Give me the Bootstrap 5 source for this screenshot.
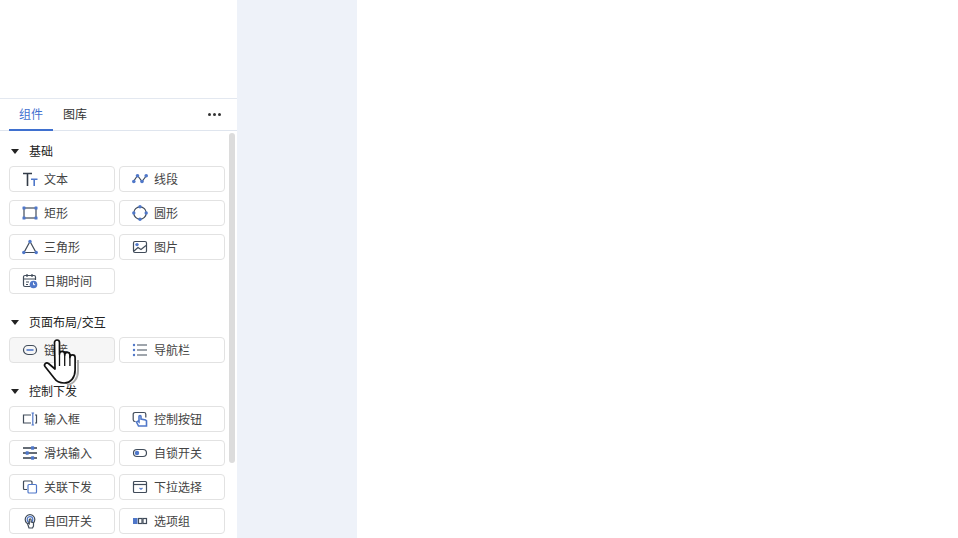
<!DOCTYPE html>
<html lang="zh">
<head>
<meta charset="utf-8">
<title>组件</title>
<link href="https://cdn.jsdelivr.net/npm/bootstrap@5.3.0/dist/css/bootstrap.min.css" rel="stylesheet">
<style>
html,body{height:100%;overflow:hidden;background:#fff}
body{font:12px/1.4 "Noto Sans CJK SC","Liberation Sans",sans-serif;color:#333}
.side-pane{width:237px;height:538px;position:relative;flex:none;overflow:hidden}
.top-gap{height:99px;border-bottom:1px solid #e3e8f0}
.tab-bar{height:32px;border-bottom:1px solid #dfe5ee;padding-left:9px;padding-right:16px}
.tab-item{width:44px;height:32px;display:flex;align-items:center;justify-content:center;color:#333}
.tab-on{color:#3f70cf;border-bottom:2px solid #3f70cf;height:33px;padding-top:1px}
.dot-row{gap:2px}
.dot-row i{width:3px;height:3px;border-radius:50%;background:#333;display:block}
.lib-body{padding:10px 12px 0 9px}
.sec-head{height:20px;margin-bottom:5px;gap:10px;color:#222}
.sec-arrow{width:0;height:0;border-left:4px solid transparent;border-right:4px solid transparent;border-top:5px solid #222;margin-left:2px}
.tool-grid{display:grid;grid-template-columns:106px 106px;gap:8px 4px;margin-bottom:18px}
.tool-btn{height:26px;border:1px solid #e2e2e2;border-radius:4px;background:#fff;padding:0 0 0 12px;gap:6px;color:#444;white-space:nowrap}
.tool-hover{background:#f6f6f6}
.tool-btn svg{width:16px;height:16px;flex:none}
.ink{fill:none;stroke:#414c5a;stroke-width:1.2}
.ink-bold{fill:none;stroke:#333c48;stroke-width:1.6}
.tint{fill:none;stroke:#4f77c9;stroke-width:1.2}
.tint-bold{fill:none;stroke:#4f77c9;stroke-width:1.6}
.tint-fill{fill:#4f77c9}
.bar-track{position:absolute;left:229px;top:133px;width:6px;height:330px;border-radius:3px;background:#dcdcdc}
.hand-cursor{position:absolute;left:42px;top:337px;width:38px;height:50px}
.mid-pane{width:120px;height:538px;background:#eef2f9;flex:none}
</style>
</head>
<body class="d-flex">
<div class="side-pane">
  <div class="top-gap"></div>
  <div class="tab-bar d-flex align-items-center">
    <div class="tab-item tab-on">组件</div>
    <div class="tab-item">图库</div>
    <div class="d-flex dot-row ms-auto"><i></i><i></i><i></i></div>
  </div>
  <div class="lib-body">
    <div class="sec-head d-flex align-items-center"><span class="sec-arrow"></span><span>基础</span></div>
    <div class="tool-grid">
      <div class="tool-btn d-flex align-items-center"><svg viewBox="0 0 16 16"><path class="ink-bold" d="M1 2.500H10M5.500 2.500V15"/><path class="tint-bold" d="M9 8.200H15.500M12.200 8.200V15"/></svg>文本</div>
      <div class="tool-btn d-flex align-items-center"><svg viewBox="0 0 16 16"><path class="ink" d="M1.500 10.500L5.500 4.500L10 10.500L14.500 4.500"/><circle class="tint-fill" cx="1.800" cy="10.500" r="1.800"/><circle class="tint-fill" cx="5.500" cy="4.800" r="1.800"/><circle class="tint-fill" cx="10" cy="10.500" r="1.800"/><circle class="tint-fill" cx="14.200" cy="4.800" r="1.800"/></svg>线段</div>
      <div class="tool-btn d-flex align-items-center"><svg viewBox="0 0 16 16"><rect class="ink" x="2" y="3" width="12" height="10"/><g class="tint-fill"><rect x="0.500" y="1.500" width="3" height="3" rx=".6"/><rect x="12.500" y="1.500" width="3" height="3" rx=".6"/><rect x="0.500" y="11.500" width="3" height="3" rx=".6"/><rect x="12.500" y="11.500" width="3" height="3" rx=".6"/></g></svg>矩形</div>
      <div class="tool-btn d-flex align-items-center"><svg viewBox="0 0 16 16"><circle class="ink" cx="8" cy="8" r="6.200"/><g class="tint-fill"><circle cx="8" cy="1.800" r="1.700"/><circle cx="8" cy="14.200" r="1.700"/><circle cx="1.800" cy="8" r="1.700"/><circle cx="14.200" cy="8" r="1.700"/></g></svg>圆形</div>
      <div class="tool-btn d-flex align-items-center"><svg viewBox="0 0 16 16"><path class="ink" d="M8 2.500L14 13.500H2Z"/><g class="tint-fill"><circle cx="8" cy="2.500" r="1.700"/><circle cx="1.800" cy="13.500" r="1.700"/><circle cx="14.200" cy="13.500" r="1.700"/></g></svg>三角形</div>
      <div class="tool-btn d-flex align-items-center"><svg viewBox="0 0 16 16"><rect class="ink" x="1.500" y="2.500" width="13" height="11" rx="1.500"/><path class="ink" d="M2 12L6 8.500L9 10.500L14 6.500"/><circle class="tint-fill" cx="5" cy="5.600" r="1.700"/></svg>图片</div>
      <div class="tool-btn d-flex align-items-center"><svg viewBox="0 0 16 16"><path class="ink" d="M8 13.500H3a1.500 1.500 0 0 1-1.500-1.500V4A1.500 1.500 0 0 1 3 2.500h9A1.500 1.500 0 0 1 13.500 4v3M1.500 6h12M5 1v3M10 1v3M4 9h3M4 11.500h2"/><circle class="tint-fill" cx="11.500" cy="11.500" r="3.800"/><path d="M11.500 9.500v2.200h1.600" fill="none" stroke="#fff"/></svg>日期时间</div>
    </div>
    <div class="sec-head d-flex align-items-center"><span class="sec-arrow"></span><span>页面布局/交互</span></div>
    <div class="tool-grid">
      <div class="tool-btn tool-hover d-flex align-items-center"><svg viewBox="0 0 16 16"><rect class="ink" x="1.500" y="3.500" width="13" height="9" rx="4.500"/><path class="tint-bold" d="M4.500 8h7"/></svg>链接</div>
      <div class="tool-btn d-flex align-items-center"><svg viewBox="0 0 16 16"><path class="ink" d="M5 3h10M5 8h10M5 13h10"/><g class="tint-fill"><circle cx="2" cy="3" r="1.200"/><circle cx="2" cy="8" r="1.200"/><circle cx="2" cy="13" r="1.200"/></g></svg>导航栏</div>
    </div>
    <div class="sec-head d-flex align-items-center"><span class="sec-arrow"></span><span>控制下发</span></div>
    <div class="tool-grid">
      <div class="tool-btn d-flex align-items-center"><svg viewBox="0 0 16 16"><path class="ink" d="M9 4H1.500v8H9M13 4h1.500v8H13"/><path class="tint" d="M9.500 2h2.600M9.500 14h2.600M10.800 2v12"/></svg>输入框</div>
      <div class="tool-btn d-flex align-items-center"><svg viewBox="0 0 16 16"><path class="ink" d="M3.500 10.500H3A1.800 1.800 0 0 1 1.200 8.700V3.300A1.800 1.800 0 0 1 3 1.500h9a1.800 1.800 0 0 1 1.800 1.800v3.200"/><path class="tint-bold" d="M6.500 15L4.500 11L6 10.200L7 11V5.500a1 1 0 0 1 2 0V8l4.500 1 1 .8V15Z"/></svg>控制按钮</div>
      <div class="tool-btn d-flex align-items-center"><svg viewBox="0 0 16 16"><path class="ink-bold" d="M1 3h14M1 8h14M1 13h14"/><g class="tint-fill"><rect x="9" y="1.300" width="3.200" height="3.400" rx=".6"/><rect x="3.600" y="6.300" width="3.200" height="3.400" rx=".6"/><rect x="9" y="11.300" width="3.200" height="3.400" rx=".6"/></g></svg>滑块输入</div>
      <div class="tool-btn d-flex align-items-center"><svg viewBox="0 0 16 16"><rect class="ink" x="1.500" y="4.500" width="13" height="7" rx="3.500"/><circle class="tint-fill" cx="5" cy="8" r="2.200"/></svg>自锁开关</div>
      <div class="tool-btn d-flex align-items-center"><svg viewBox="0 0 16 16"><path class="ink" d="M5 10.500H2.500a1 1 0 0 1-1-1V3a1 1 0 0 1 1-1H9a1 1 0 0 1 1 1v2.500"/><path class="tint" d="M6 10V6.500a1 1 0 0 1 1-1h6.500a1 1 0 0 1 1 1V13a1 1 0 0 1-1 1H7a1 1 0 0 1-1-1Z"/></svg>关联下发</div>
      <div class="tool-btn d-flex align-items-center"><svg viewBox="0 0 16 16"><rect class="ink" x="1.500" y="2.500" width="13" height="11" rx="1"/><path class="ink" d="M1.500 5.500h13"/><path class="tint" d="M7.500 9l1.500 1.200L10.500 9"/></svg>下拉选择</div>
      <div class="tool-btn d-flex align-items-center"><svg viewBox="0 0 16 16"><circle class="ink" cx="8" cy="6.500" r="4.800"/><circle class="tint" cx="8" cy="6.500" r="2.800"/><path class="ink" d="M7 15L5.500 10.500L6.800 9.800L7.300 10.500V6.800a.9 .9 0 0 1 1.800 0V9l2.400 .8V13l-1 2Z" style="fill:#fff"/></svg>自回开关</div>
      <div class="tool-btn d-flex align-items-center"><svg viewBox="0 0 16 16"><rect class="tint-fill" x="1" y="5" width="4.500" height="6"/><rect class="ink" x="6.500" y="5.500" width="3.500" height="5"/><rect class="ink" x="11" y="5.500" width="3.500" height="5"/></svg>选项组</div>
    </div>
  </div>
  <div class="bar-track"></div>
  <svg class="hand-cursor" viewBox="0 0 38 50" aria-hidden="true"><path d="M36 23V34c0 7-4 13-11 14" fill="none" stroke="#aaa" stroke-width="2"/><path d="M12.500 5.500a2.500 2.500 0 0 1 5 0V17a2.600 2.600 0 0 1 5.200 0v1a2.600 2.600 0 0 1 5.200 0v2.500a2.600 2.600 0 0 1 5.200 0V33c0 7-4 13-11 13-5 0-8-2-10-5L3 29.500c-1.500-2 1-4.500 3.500-3L13 32Z" fill="#fff" stroke="#111" stroke-width="1.700" stroke-linejoin="round"/><path d="M17.500 17V29M22.700 18V29M27.900 20.500V29" fill="none" stroke="#111" stroke-width="1.300"/></svg>
</div>
<div class="mid-pane"></div>
<script src="https://cdn.jsdelivr.net/npm/bootstrap@5.3.0/dist/js/bootstrap.bundle.min.js"></script>
</body>
</html>
